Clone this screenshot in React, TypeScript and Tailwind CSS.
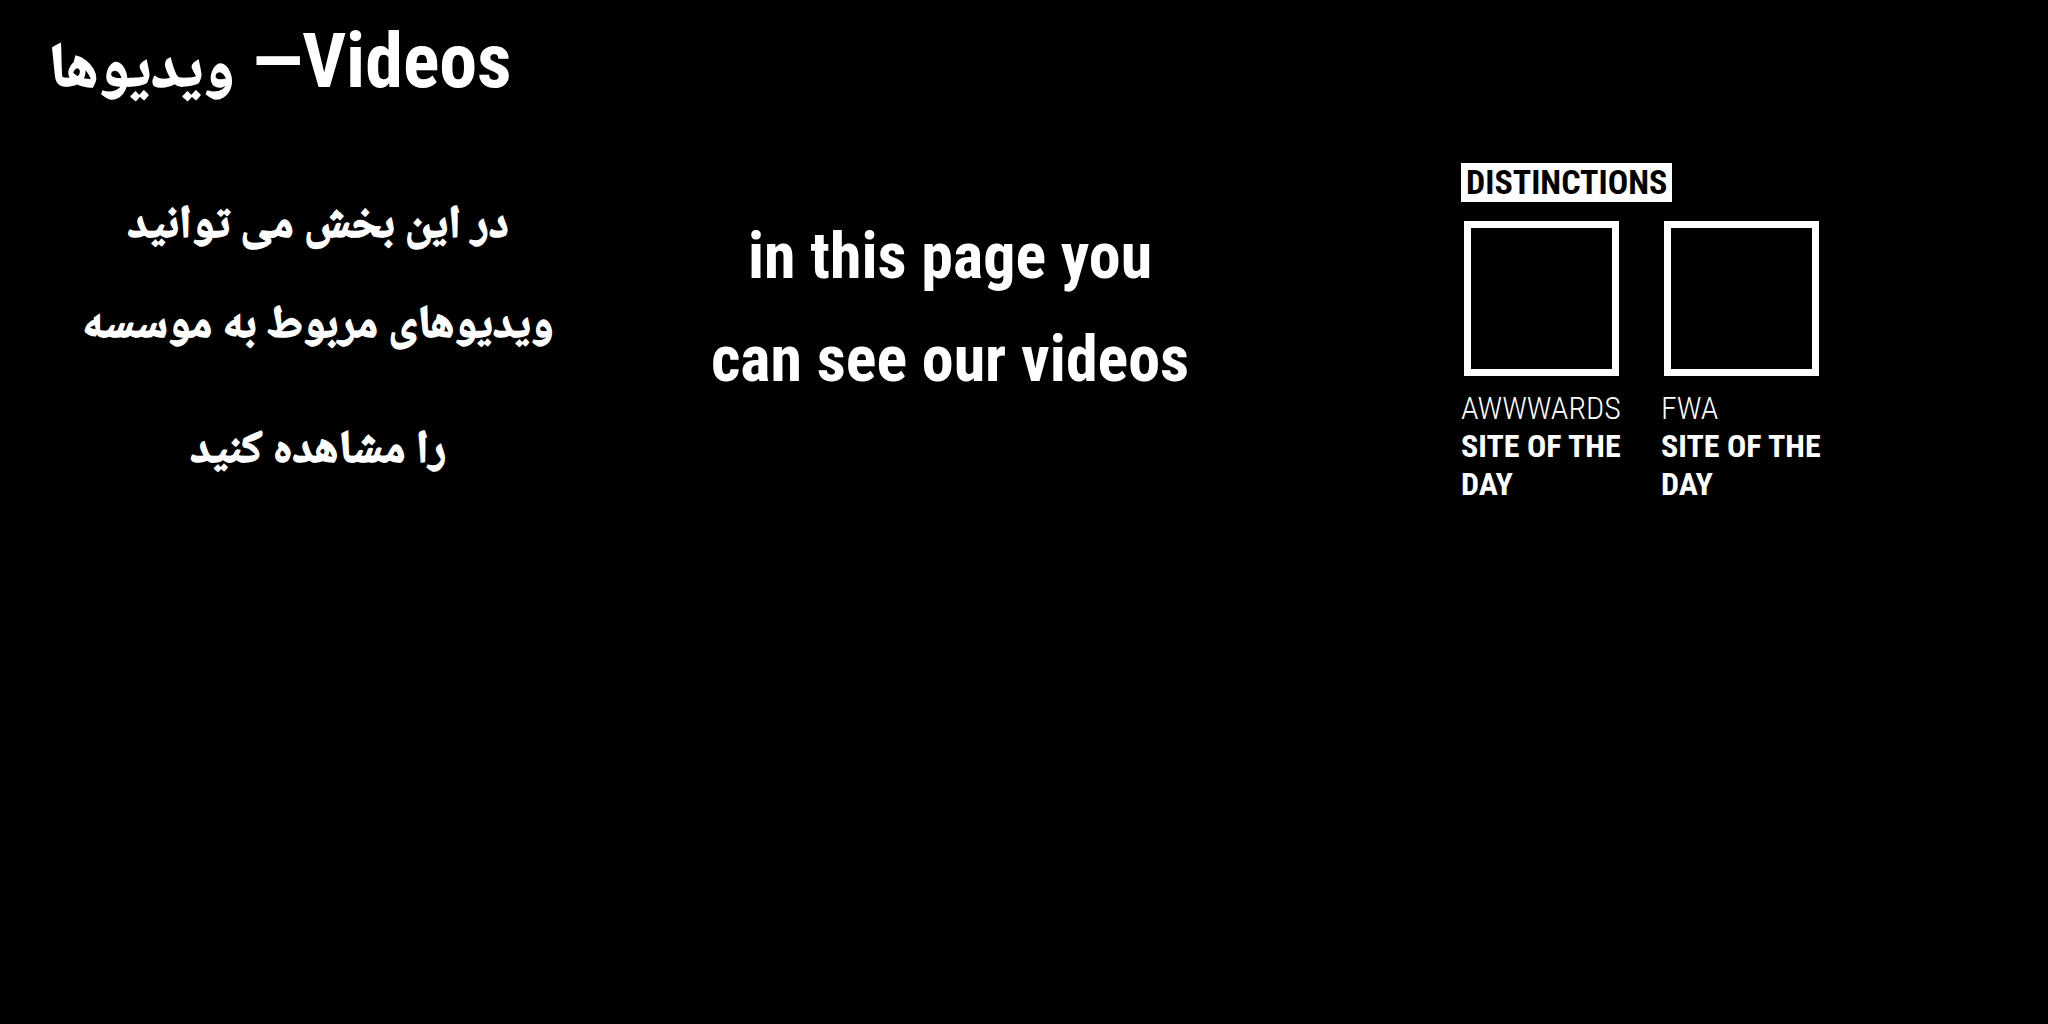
import React from "react";

const condensed = "font-['Roboto','Noto_Naskh_Arabic',sans-serif] [font-stretch:75%]";
const persian = "font-['Noto_Naskh_Arabic',serif] font-bold [-webkit-text-stroke:1.5px_#fff]";

const AWARDS = [
  { id: 1, source: "AWWWARDS", title: "SITE OF THE DAY" },
  { id: 2, source: "FWA", title: "SITE OF THE DAY" },
];

export default function App() {
  return (
    <div className="min-h-screen w-full bg-black text-white">
      {/* Title */}
      <h1 className={`${condensed} pl-[48px] pt-[17px] text-[76px] font-bold leading-[88px]`}>
        <span className={`${persian} text-[63px] leading-none`}>ویدیوها</span> —Videos
      </h1>

      <div className="flex items-start pl-[48px]">
        {/* Persian intro */}
        <div dir="rtl" className={`${persian} w-[540px] pt-[72px] text-center text-[46px]`}>
          <p className="leading-[100px]">
            در این بخش می توانید
            <br />
            ویدیوهای مربوط به موسسه
          </p>
          <p className="mt-[25px] leading-[100px]">را مشاهده کنید</p>
        </div>

        {/* English intro */}
        <div className={`${condensed} w-[724px] pt-[100px] text-center text-[64px] font-bold leading-[103px]`}>
          in this page you
          <br />
          can see our videos
        </div>

        {/* Distinctions */}
        <div className={`${condensed} ml-[149px] pt-[58px]`}>
          <span className="inline-block bg-white px-[5px] text-[34px] font-bold leading-[39px] text-black">
            DISTINCTIONS
          </span>
          <div className="mt-[19px] flex">
            {AWARDS.map((award) => (
              <div key={award.id} className="w-[200px]">
                <div className="ml-[3px] h-[155px] w-[155px] border-[7px] border-white" />
                <div className="mt-[13px] text-[32px] leading-[38px]">
                  <div className="font-light">{award.source}</div>
                  <div className="font-bold">{award.title}</div>
                </div>
              </div>
            ))}
          </div>
        </div>
      </div>
    </div>
  );
}
